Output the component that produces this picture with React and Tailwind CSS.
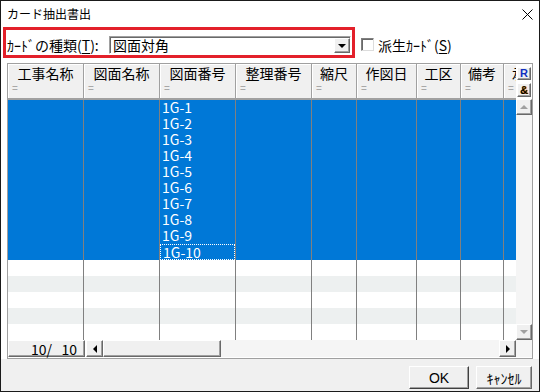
import React from "react";

const COLS = [
  { name: "工事名称", w: "w-[76px]" },
  { name: "図面名称", w: "w-[76px]" },
  { name: "図面番号", w: "w-[76px]" },
  { name: "整理番号", w: "w-[76px]" },
  { name: "縮尺", w: "w-[45px]" },
  { name: "作図日", w: "w-[60px]" },
  { name: "工区", w: "w-[44px]" },
  { name: "備考", w: "w-[43px]" },
  { name: "承認", w: "w-[12px]", last: true },
];

const raised =
  "bg-[#f0f0f0] border border-t-white border-l-white border-r-[#696969] border-b-[#696969] shadow-[inset_-1px_-1px_0_#a0a0a0]";

function Tri({ dir, color = "#000" }) {
  const pts = {
    up: "0,4 4,0 8,4",
    down: "0,0 8,0 4,4",
    left: "4,0 4,8 0,4",
    right: "0,0 0,8 4,4",
  }[dir];
  const v = dir === "up" || dir === "down";
  return (
    <svg width={v ? 8 : 4} height={v ? 4 : 8} viewBox={v ? "0 0 8 4" : "0 0 4 8"}>
      <polygon points={pts} fill={color} />
    </svg>
  );
}

function HeaderCell({ c }) {
  return (
    <div className={`${c.w} h-full flex-none overflow-hidden bg-[#f0f0f0] ${c.last ? "" : "border-r border-[#a0a0a0]"} shadow-[inset_1px_1px_0_#fff]`}>
      <div className={`${c.last ? "w-[44px]" : "w-full"} pt-[1px] text-center text-[14px] leading-[16px] whitespace-nowrap`}>
        {c.name}
      </div>
      <div className="pl-[4px] mt-[3px] text-[10px] leading-[10px] text-[#a8a8a8] font-['Liberation_Sans',sans-serif]">=</div>
    </div>
  );
}

function Row({ i }) {
  const sel = i < 10;
  const bg = sel ? "bg-[#0078d7]" : i % 2 === 1 ? "bg-[#edf0f0]" : "bg-white";
  return (
    <div className={`flex h-[16px] flex-none ${bg}`}>
      {COLS.map((c, k) => (
        <div
          key={k}
          className={`${c.w} h-full flex-none ${c.last ? "" : "border-r border-[#808080]"}`}
        >
          {sel && k === 2 && (
            <div
              className={`h-full pl-[2px] text-white text-[14px] leading-[15px] ${i === 9 ? "border border-dotted border-white pl-[1px] leading-[13px]" : ""}`}
            >
              1G-{i + 1}
            </div>
          )}
        </div>
      ))}
    </div>
  );
}

export default function App() {
  return (
    <div className="w-[540px] h-[392px] border border-[#1a1a1a] bg-white flex flex-col overflow-hidden text-black font-['Noto_Sans_CJK_JP',sans-serif]">
      {/* title bar */}
      <div className="h-[26px] flex-none flex items-center justify-between pl-[6px] pr-[6px]">
        <span className="text-[12px] leading-[14px]">カード抽出書出</span>
        <svg width="11" height="11" viewBox="0 0 11 11" className="mt-[1px]">
          <path d="M0.5 0.5 L10.5 10.5 M10.5 0.5 L0.5 10.5" stroke="#000" strokeWidth="1" />
        </svg>
      </div>

      {/* controls */}
      <div className="h-[31px] flex-none flex items-start">
        <div className="ml-[2px] w-[352px] h-[31px] border-[3px] border-[#e3202a] flex items-start pl-[1px] pt-[6px]">
          <span className="h-[18px] flex items-center text-[14px] leading-[16px] whitespace-nowrap">
            ｶｰﾄﾞの種類(<span className="underline underline-offset-2">T</span>):
          </span>
          <div className="ml-auto mr-[1px] w-[242px] h-[18px] border border-t-[#a0a0a0] border-l-[#a0a0a0] border-r-white border-b-white">
            <div className="h-full flex bg-white shadow-[inset_1px_1px_0_#696969]">
              <span className="flex-1 pl-[3px] pt-[1px] text-[14px] leading-[15px]">図面対角</span>
              <div className={`w-[16px] h-[15px] mt-[1px] flex items-center justify-center ${raised}`}>
                <Tri dir="down" />
              </div>
            </div>
          </div>
        </div>
        <div className="ml-[6px] mt-[9px] h-[17px] flex items-center">
          <div className="w-[13px] h-[13px] bg-white border border-t-[#808080] border-l-[#808080] border-r-[#dcdcdc] border-b-[#dcdcdc] shadow-[inset_1px_1px_0_#696969]" />
          <span className="ml-[4px] text-[14px] leading-[16px] whitespace-nowrap">
            派生ｶｰﾄﾞ(<span className="underline underline-offset-2">S</span>)
          </span>
        </div>
      </div>

      {/* grid */}
      <div className="ml-[6px] mt-[5px] w-[526px] h-[296px] flex-none border border-[#a0a0a0] flex flex-col">
        <div className="flex h-[276px] flex-none">
          <div className="w-[508px] flex-none flex flex-col">
            <div className="flex h-[36px] flex-none border-b-2 border-[#a0a0a0]">
              {COLS.map((c, k) => (
                <HeaderCell key={k} c={c} />
              ))}
            </div>
            {Array.from({ length: 15 }, (_, i) => (
              <Row key={i} i={i} />
            ))}
          </div>
          {/* vertical scrollbar */}
          <div className="w-[16px] flex-none flex flex-col">
            <div className="h-[35px] flex-none bg-white flex flex-col items-center pt-[3px]">
              <div className={`w-[14px] h-[13px] flex-none flex items-center justify-center text-[11px] leading-[11px] font-bold text-[#1030c0] font-['Liberation_Sans',sans-serif] ${raised}`}>
                R
              </div>
              <div className={`mt-[3px] w-[14px] h-[14px] flex-none flex items-center justify-center text-[11px] leading-[11px] font-bold text-black font-['Liberation_Sans',sans-serif] [text-shadow:1px_0_0_#ff8c00] ${raised}`}>
                &amp;
              </div>
            </div>
            <div className={`h-[16px] flex-none flex items-center justify-center ${raised}`}>
              <Tri dir="up" color="#a0a0a0" />
            </div>
            <div className="flex-1 bg-[#f5f5f5]" />
            <div className={`h-[16px] flex-none flex items-center justify-center ${raised}`}>
              <Tri dir="down" color="#a0a0a0" />
            </div>
          </div>
        </div>

        {/* footer / horizontal scrollbar */}
        <div className="flex h-[18px] flex-none bg-white">
          <div className={`w-[77px] h-[17px] flex items-center justify-end pr-[7px] text-[14px] leading-none whitespace-pre ${raised}`}>
            {"10/   10"}
          </div>
          <div className={`ml-[1px] w-[17px] h-[17px] flex items-center justify-center ${raised}`}>
            <Tri dir="left" />
          </div>
          <div className={`w-[118px] h-[17px] ${raised}`} />
          <div className="flex-1 h-[17px] bg-[#f5f5f5]" />
          <div className={`w-[17px] h-[17px] flex items-center justify-center ${raised}`}>
            <Tri dir="right" />
          </div>
          <div className="w-[16px] h-[17px] bg-[#f5f5f5]" />
        </div>
      </div>

      {/* buttons */}
      <div className="flex-1 bg-[#f0f0f0] flex justify-end items-start pt-[7px] pr-[7px] gap-[7px]">
        <button className="w-[60px] h-[23px] flex items-center justify-center text-[14px] leading-none font-['Liberation_Sans',sans-serif] bg-[#f0f0f0] border border-t-white border-l-white border-r-[#404040] border-b-[#404040] shadow-[inset_-1px_-1px_0_#a0a0a0]">
          OK
        </button>
        <button className={`w-[56px] h-[23px] flex items-center justify-center text-[14px] leading-none ${raised}`}>
          ｷｬﾝｾﾙ
        </button>
      </div>
    </div>
  );
}
